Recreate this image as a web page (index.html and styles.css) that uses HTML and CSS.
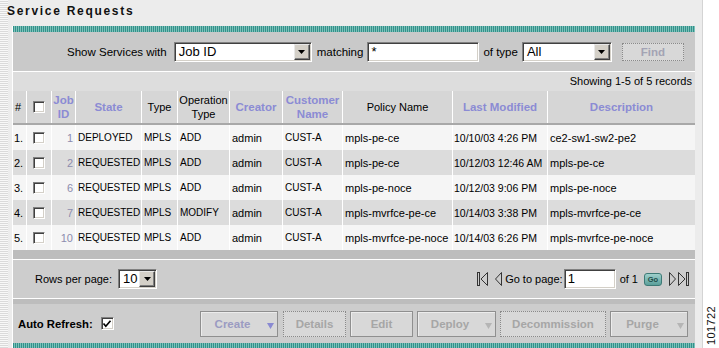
FILE: index.html
```html
<!DOCTYPE html>
<html>
<head>
<meta charset="utf-8">
<link rel="stylesheet" href="styles.css">
</head>
<body>
<div class="page">
  <div class="main">
    <div class="title">Service Requests</div>
    <div class="panel">
      <div class="teal"></div>
      <div class="filter">
        <span class="lbl">Show Services with</span>
        <div class="select w-job"><span class="sel-val">Job ID</span><span class="sel-btn"><svg width="7" height="4" viewBox="0 0 7 4"><polygon points="0,0 7,0 3.5,4" fill="#000"/></svg></span></div>
        <span class="lbl m-match">matching</span>
        <div class="input w-match">*</div>
        <span class="lbl m-type">of type</span>
        <div class="select w-type"><span class="sel-val">All</span><span class="sel-btn"><svg width="7" height="4" viewBox="0 0 7 4"><polygon points="0,0 7,0 3.5,4" fill="#000"/></svg></span></div>
        <div class="btn find dotted"><span class="blbl">Find</span></div>
      </div>
      <div class="band">Showing 1-5 of 5 records</div>
      <div class="grid head">
        <div class="c hash">#</div>
        <div class="c ctr"><span class="cb"></span></div>
        <div class="c ctr sort">Job<br>ID</div>
        <div class="c ctr sort">State</div>
        <div class="c ctr">Type</div>
        <div class="c ctr">Operation<br>Type</div>
        <div class="c ctr sort">Creator</div>
        <div class="c ctr sort">Customer<br>Name</div>
        <div class="c ctr">Policy Name</div>
        <div class="c ctr sort">Last Modified</div>
        <div class="c ctr sort last">Description</div>
      </div>
      <div class="grid row odd">
        <div class="c num">1.</div><div class="c ctr"><span class="cb"></span></div><div class="c jid">1</div>
        <div class="c caps">DEPLOYED</div><div class="c caps">MPLS</div><div class="c caps">ADD</div>
        <div class="c">admin</div><div class="c caps">CUST-A</div><div class="c">mpls-pe-ce</div>
        <div class="c date">10/10/03 4:26 PM</div><div class="c last">ce2-sw1-sw2-pe2</div>
      </div>
      <div class="grid row even">
        <div class="c num">2.</div><div class="c ctr"><span class="cb"></span></div><div class="c jid">2</div>
        <div class="c caps">REQUESTED</div><div class="c caps">MPLS</div><div class="c caps">ADD</div>
        <div class="c">admin</div><div class="c caps">CUST-A</div><div class="c">mpls-pe-ce</div>
        <div class="c date">10/12/03 12:46 AM</div><div class="c last">mpls-pe-ce</div>
      </div>
      <div class="grid row odd">
        <div class="c num">3.</div><div class="c ctr"><span class="cb"></span></div><div class="c jid">6</div>
        <div class="c caps">REQUESTED</div><div class="c caps">MPLS</div><div class="c caps">ADD</div>
        <div class="c">admin</div><div class="c caps">CUST-A</div><div class="c">mpls-pe-noce</div>
        <div class="c date">10/12/03 9:06 PM</div><div class="c last">mpls-pe-noce</div>
      </div>
      <div class="grid row even">
        <div class="c num">4.</div><div class="c ctr"><span class="cb"></span></div><div class="c jid">7</div>
        <div class="c caps">REQUESTED</div><div class="c caps">MPLS</div><div class="c caps">MODIFY</div>
        <div class="c">admin</div><div class="c caps">CUST-A</div><div class="c">mpls-mvrfce-pe-ce</div>
        <div class="c date">10/14/03 3:38 PM</div><div class="c last">mpls-mvrfce-pe-ce</div>
      </div>
      <div class="grid row odd">
        <div class="c num">5.</div><div class="c ctr"><span class="cb"></span></div><div class="c jid">10</div>
        <div class="c caps">REQUESTED</div><div class="c caps">MPLS</div><div class="c caps">ADD</div>
        <div class="c">admin</div><div class="c caps">CUST-A</div><div class="c">mpls-mvrfce-pe-noce</div>
        <div class="c date">10/14/03 6:26 PM</div><div class="c last">mpls-mvrfce-pe-noce</div>
      </div>
      <div class="sep1"></div>
      <div class="pager">
        <div class="rpp">
          <span class="lbl">Rows per page:</span>
          <div class="select w-rpp"><span class="sel-val">10</span><span class="sel-btn"><svg width="7" height="4" viewBox="0 0 7 4"><polygon points="0,0 7,0 3.5,4" fill="#000"/></svg></span></div>
        </div>
        <div class="nav">
          <svg class="ic-first" width="11" height="14" viewBox="0 0 11 14"><rect x="0.5" y="0.5" width="2" height="13" fill="none" stroke="#333"/><polygon points="10.5,0.5 4,7 10.5,13.5" fill="none" stroke="#333"/></svg>
          <svg class="ic-prev" width="7" height="14" viewBox="0 0 7 14"><polygon points="6.5,0.5 0.5,7 6.5,13.5" fill="none" stroke="#333"/></svg>
          <span class="lbl gtp">Go to page:</span>
          <div class="input w-page">1</div>
          <span class="lbl of">of 1</span>
          <div class="go">Go</div>
          <svg class="ic-next" width="7" height="14" viewBox="0 0 7 14"><polygon points="0.5,0.5 6.5,7 0.5,13.5" fill="none" stroke="#333"/></svg>
          <svg class="ic-last" width="12" height="14" viewBox="0 0 12 14"><polygon points="0.5,0.5 7,7 0.5,13.5" fill="none" stroke="#333"/><rect x="8.5" y="0.5" width="2" height="13" fill="none" stroke="#333"/></svg>
        </div>
      </div>
      <div class="sep2"></div>
      <div class="actions">
        <span class="auto">Auto Refresh:</span>
        <span class="cb checked"><svg width="10" height="10" viewBox="0 0 10 10"><polyline points="1.5,4.5 3.8,7.2 8.5,1.8" fill="none" stroke="#000" stroke-width="1.7"/></svg></span>
        <div class="btns">
          <div class="btn w-create primary"><span class="blbl">Create</span><span class="arr"><svg width="7" height="6" viewBox="0 0 7 6"><polygon points="0,0 7,0 3.5,6" fill="#8a8ad2"/></svg></span></div>
          <div class="btn w-details dotted"><span class="blbl">Details</span></div>
          <div class="btn w-edit"><span class="blbl">Edit</span></div>
          <div class="btn w-deploy"><span class="blbl">Deploy</span><span class="arr"><svg width="7" height="6" viewBox="0 0 7 6"><polygon points="0,0 7,0 3.5,6" fill="#b5b5b5"/></svg></span></div>
          <div class="btn w-decom dotted"><span class="blbl">Decommission</span></div>
          <div class="btn w-purge"><span class="blbl">Purge</span><span class="arr"><svg width="7" height="6" viewBox="0 0 7 6"><polygon points="0,0 7,0 3.5,6" fill="#b5b5b5"/></svg></span></div>
        </div>
      </div>
      <div class="teal"></div>
    </div>
  </div>
  <div class="gutter"><span class="fig">101722</span></div>
</div>
</body>
</html>
```

FILE: styles.css
```css
* { box-sizing: border-box; }
html, body { margin: 0; padding: 0; }
body {
  width: 719px;
  height: 348px;
  overflow: hidden;
  background: #fff;
  font-family: "Liberation Sans", Arial, sans-serif;
  font-size: 11px;
  color: #000;
}
.page { display: flex; height: 348px; }
.main {
  width: 702px;
  display: flex;
  flex-direction: column;
  background: repeating-linear-gradient(180deg, #f8f8f8 0 1px, #dadada 1px 2px) 0 0 / 8px 100% no-repeat, #ececec;
}
.gutter {
  flex: 1;
  border-left: 1px solid #d4d4d4;
  background: #fff;
  display: flex;
  flex-direction: column;
  justify-content: flex-end;
  align-items: center;
  padding-bottom: 3px;
}
.fig {
  writing-mode: vertical-rl;
  transform: rotate(180deg);
  font-size: 11px;
  letter-spacing: 0.4px;
  color: #111;
}
.title {
  height: 26px;
  padding: 4px 0 0 7px;
  font-weight: bold;
  font-size: 12px;
  line-height: 14px;
  letter-spacing: 1.7px;
  color: #111;
}
.panel {
  margin: 0 7px 0 12px;
  border-left: 1px solid #fff;
  background: #cdcdcd;
  display: flex;
  flex-direction: column;
  flex: 1;
  overflow: hidden;
}
.teal {
  height: 6px;
  flex: none;
  background: repeating-linear-gradient(90deg, #33918a 0 1px, #7cc1ba 1px 2px);
}

/* filter row */
.filter {
  height: 40px;
  flex: none;
  border-bottom: 1px solid #fff;
  background: #c9c9c9;
  display: flex;
  align-items: center;
  padding-left: 54px;
}
.filter .lbl { font-size: 11.5px; }
.lbl { white-space: nowrap; }
.select {
  height: 20px;
  display: flex;
  background: #fff;
  border: 1px solid;
  border-color: #808080 #fff #fff #808080;
  box-shadow: inset 1px 1px 0 #404040, inset -1px -1px 0 #d4d0c8;
  padding: 1px;
}
.sel-val {
  flex: 1;
  font-size: 13px;
  line-height: 16px;
  padding-left: 3px;
  white-space: nowrap;
}
.sel-btn {
  width: 16px;
  background: #d4d0c8;
  border: 1px solid;
  border-color: #e8e8e8 #404040 #404040 #e8e8e8;
  box-shadow: inset -1px -1px 0 #808080;
  display: flex;
  align-items: center;
  justify-content: center;
}
.input {
  height: 20px;
  background: #fff;
  border: 1px solid;
  border-color: #808080 #fff #fff #808080;
  box-shadow: inset 1px 1px 0 #404040, inset -1px -1px 0 #d4d0c8;
  font-size: 13px;
  line-height: 17px;
  padding-left: 3px;
}
.w-job { width: 138px; margin-left: 7px; }
.m-match { margin-left: 5px; }
.w-match { width: 112px; margin-left: 4px; }
.m-type { margin-left: 4px; }
.w-type { width: 90px; margin-left: 4px; }

/* buttons */
.btn {
  height: 26px;
  display: flex;
  align-items: center;
  background: #d8d8d8;
  border: 1px solid #8f8f8f;
  box-shadow: inset 1px 1px 0 #ececec;
  font-weight: bold;
  font-size: 11.5px;
  color: #a6a6a6;
}
.btn.dotted { border: 1px dotted #8a8a8a; box-shadow: none; }
.blbl { flex: 1; text-align: center; white-space: nowrap; }
.arr { width: 13px; display: flex; justify-content: center; padding-top: 4px; }
.primary .blbl { color: #9b9bc2; }
.find { width: 62px; height: 18px; margin-left: 10px; color: #a3a3b4; }

/* band */
.band {
  height: 19px;
  flex: none;
  background: #dddddd;
  text-align: right;
  line-height: 19px;
  padding-right: 3px;
}

/* grid */
.grid {
  display: grid;
  grid-template-columns: 14px 25px 24px 66px 36px 52px 53px 60px 110px 95px 147px;
  flex: none;
}
.c {
  border-right: 1px solid #fff;
  display: flex;
  align-items: center;
  padding-left: 2px;
  white-space: nowrap;
  overflow: visible;
}
.c.last { border-right: none; }
.head {
  height: 34px;
  background: #d6d6d6;
  border-bottom: 2px solid #a8a8a8;
}
.head .c { line-height: 14px; }
.ctr { justify-content: center; text-align: center; padding-left: 0; }
.hash { padding-left: 2px; }
.sort { color: #8b8bd4; font-weight: bold; font-size: 11.5px; }
.row { height: 25px; }
.odd { background: #f5f5f5; }
.even { background: #dcdcdc; }
.num { padding-left: 1px; }
.jid { justify-content: flex-end; padding-right: 2px; color: #8c8cae; }
.caps { font-size: 10px; }
.date { font-size: 10.5px; padding-left: 1px; }
.cb {
  width: 12px;
  height: 12px;
  background: #fff;
  border: 1px solid;
  border-color: #808080 #fff #fff #808080;
  box-shadow: inset 1px 1px 0 #404040, inset -1px -1px 0 #d4d0c8;
  display: inline-flex;
  align-items: center;
  justify-content: center;
}
.cb.checked { width: 13px; height: 13px; margin-left: 8px; }

.sep1 {
  height: 10px;
  flex: none;
  background: #bdbdbd;
  border-bottom: 1px solid #fff;
}
.pager {
  height: 39px;
  flex: none;
  border-bottom: 1px solid #fff;
  display: flex;
  align-items: center;
  justify-content: space-between;
  padding: 0 5px 0 22px;
}
.rpp { display: flex; align-items: center; }
.w-rpp { width: 39px; margin-left: 6px; }
.nav { display: flex; align-items: center; }
.ic-prev { margin-left: 7px; }
.gtp { margin-left: 3px; }
.w-page { width: 52px; margin-left: 1px; }
.of { margin-left: 4px; }
.go {
  width: 18px;
  height: 13px;
  margin-left: 6px;
  border-radius: 3px;
  border: 1px solid #3d7a76;
  background: linear-gradient(#9fd0cc, #5a9f9a);
  font-size: 7.5px;
  font-weight: bold;
  color: #1f4d4a;
  text-align: center;
  line-height: 11px;
}
.ic-next { margin-left: 7px; }
.ic-last { margin-left: 2px; }

.sep2 { height: 5px; flex: none; background: #bdbdbd; }
.actions {
  height: 39px;
  flex: none;
  display: flex;
  align-items: center;
  padding: 0 7px 0 5px;
}
.auto { font-weight: bold; font-size: 11.3px; white-space: nowrap; }
.btns { margin-left: auto; display: flex; gap: 4px; }
.w-create { width: 78px; margin-right: 1px; }
.w-details { width: 63px; }
.w-edit { width: 63px; }
.w-deploy { width: 79px; }
.w-decom { width: 106px; }
.w-purge { width: 78px; }
```
